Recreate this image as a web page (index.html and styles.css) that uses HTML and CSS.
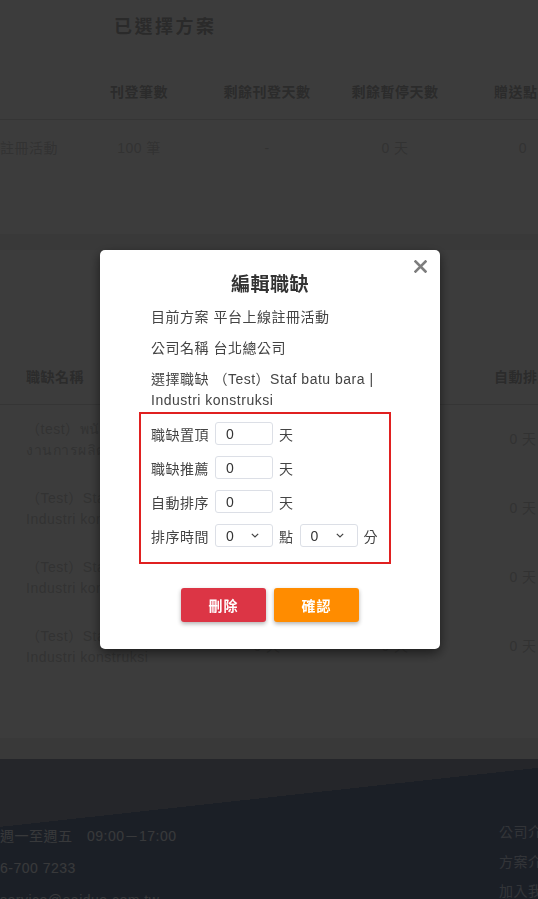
FILE: index.html
```html
<!DOCTYPE html>
<html>
<head>
	<meta charset="utf-8">
	<title>編輯職缺</title>
	<link rel="stylesheet" href="styles.css">
</head>
<body>
	<main class="page">

		<section class="card plan-card">
			<h2 class="card-title">已選擇方案</h2>
			<div class="plan-table">
				<div class="tr th">
					<span class="c-first"></span>
					<span>刊登筆數</span>
					<span>剩餘刊登天數</span>
					<span>剩餘暫停天數</span>
					<span>贈送點數</span>
				</div>
				<div class="tr">
					<span class="c-first">平台上線註冊活動</span>
					<span>100 筆</span>
					<span>-</span>
					<span>0 天</span>
					<span>0</span>
				</div>
			</div>
		</section><!-- / plan-card -->

		<section class="card job-card">
			<h2 class="card-title">職缺設定</h2>
			<div class="job-table">
				<div class="tr th">
					<span class="c-name">職缺名稱</span>
					<span>職缺置頂</span>
					<span>職缺推薦</span>
					<span>自動排序</span>
				</div>
				<div class="tr">
					<span class="c-name">（test）พนักงานฝ่ายผลิต | งานการผลิต</span>
					<span>0 天</span>
					<span>0 天</span>
					<span>0 天</span>
				</div>
				<div class="tr">
					<span class="c-name">（Test）Staf batu bara | Industri konstruksi</span>
					<span>0 天</span>
					<span>0 天</span>
					<span>0 天</span>
				</div>
				<div class="tr">
					<span class="c-name">（Test）Staf batu bara | Industri konstruksi</span>
					<span>0 天</span>
					<span>0 天</span>
					<span>0 天</span>
				</div>
				<div class="tr">
					<span class="c-name">（Test）Staf batu bara | Industri konstruksi</span>
					<span>0 天</span>
					<span>0 天</span>
					<span>0 天</span>
				</div>
			</div>
		</section><!-- / job-card -->

	</main>

	<footer class="footer">
		<div class="footer-info">
			<p>週一至週五　09:00－17:00</p>
			<p>6-700 7233</p>
			<p>service@eaidue.com.tw</p>
		</div>
		<div class="footer-links">
			<p>公司介紹</p>
			<p>方案介紹</p>
			<p>加入我們</p>
		</div>
	</footer>

	<div class="mask">
		<div class="modal">
			<span class="modal-close">
				<svg width="13" height="13" viewBox="0 0 13 13"><path d="M1.5 1.5l10 10M11.5 1.5l-10 10" stroke="#7d7d7d" stroke-width="2.6" stroke-linecap="square"/></svg>
			</span>
			<h3 class="modal-title">編輯職缺</h3>

			<div class="modal-body">
				<p class="info">目前方案 平台上線註冊活動</p>
				<p class="info">公司名稱 台北總公司</p>
				<p class="info">選擇職缺 （Test）Staf batu bara | Industri konstruksi</p>

				<div class="setting-box">
					<div class="field">
						<label>職缺置頂</label>
						<input type="text" class="num" value="0">
						<span>天</span>
					</div>
					<div class="field">
						<label>職缺推薦</label>
						<input type="text" class="num" value="0">
						<span>天</span>
					</div>
					<div class="field">
						<label>自動排序</label>
						<input type="text" class="num" value="0">
						<span>天</span>
					</div>
					<div class="field">
						<label>排序時間</label>
						<span class="select">
							<select><option>0</option></select>
							<svg width="8" height="5" viewBox="0 0 8 5"><path d="M0.8 0.8l3.2 3.2 3.2-3.2" fill="none" stroke="#444" stroke-width="1.2"/></svg>
						</span>
						<span>點</span>
						<span class="select">
							<select><option>0</option></select>
							<svg width="8" height="5" viewBox="0 0 8 5"><path d="M0.8 0.8l3.2 3.2 3.2-3.2" fill="none" stroke="#444" stroke-width="1.2"/></svg>
						</span>
						<span>分</span>
					</div>
				</div><!-- / setting-box -->
			</div>

			<div class="modal-actions">
				<button class="btn btn-delete">刪除</button>
				<button class="btn btn-confirm">確認</button>
			</div>
		</div><!-- / modal -->
	</div>
</body>
</html>
```

FILE: styles.css
```css
html, body {
  margin: 0;
  height: 100%;
  overflow: hidden;
}

body {
  background: #f3f3f3;
  font-family: "Liberation Sans", "Noto Sans CJK TC", sans-serif;
  font-size: 14px;
  letter-spacing: 0.5px;
}

p {
  margin: 0;
}

/* page behind the mask */
.card {
  background: #fff;
  overflow: hidden;
}

.plan-card {
  height: 234px;
  margin-bottom: 16px;
}

.job-card {
  height: 488px;
  margin-bottom: 21px;
}

.card-title {
  margin: 0;
  padding: 14px 0 0 114px;
  font-size: 18px;
  line-height: 26px;
  letter-spacing: 2.5px;
  color: #b3b3b3;
}

.tr {
  display: flex;
  line-height: 21px;
  color: #d5d5d5;
}

.tr > span {
  flex: 0 0 128px;
  text-align: center;
}

.th {
  font-weight: bold;
  color: #b7b7b7;
  padding: 11px 0 16px;
  border-bottom: 1px solid #e2e2e2;
}

.plan-table {
  margin: 31px 0 0 -75px;
}

.plan-table .c-first {
  flex-basis: 150px;
  white-space: nowrap;
}

.plan-table .tr:not(.th) {
  padding-top: 18px;
}

.job-table {
  margin-top: 66px;
  padding-left: 26px;
}

.job-table .th {
  margin-left: -26px;
  padding-left: 26px;
}

.job-table .tr:not(.th) {
  padding: 13.5px 0;
  align-items: center;
}

.job-table .c-name {
  flex-basis: 177px;
  text-align: left;
}

/* footer */
.footer {
  display: flex;
  height: 200px;
  padding-top: 63px;
  box-sizing: border-box;
  overflow: hidden;
  background: linear-gradient(353.74deg, #7384a2 190px, #9da2b3 190px);
  line-height: 21px;
}

.footer-info {
  flex: 0 0 499px;
  padding-top: 4px;
  color: #eef2f8;
}

.footer-info p {
  margin-bottom: 11px;
}

.footer-links {
  white-space: nowrap;
  color: #d6deec;
}

.footer-links p {
  margin-bottom: 8.5px;
}

/* modal */
.mask {
  position: fixed;
  top: 0;
  left: 0;
  right: 0;
  bottom: 0;
  background: rgba(0, 0, 0, 0.765);
  display: flex;
  align-items: center;
  justify-content: center;
  padding-left: 2px;
}

.modal {
  position: relative;
  width: 340px;
  padding: 21px 0 27px;
  box-sizing: border-box;
  background: #fff;
  border-radius: 5px;
  box-shadow: 0 4px 12px rgba(0, 0, 0, 0.55);
}

.modal-close {
  position: absolute;
  top: 10px;
  right: 13px;
  width: 13px;
  height: 13px;
  cursor: pointer;
}

.modal-close svg {
  display: block;
}

.modal-title {
  margin: 0 0 8px;
  text-align: center;
  font-size: 19px;
  line-height: 28px;
  color: #333;
}

.modal-body {
  padding: 0 49px 0 39px;
  color: #444;
}

.info {
  padding-left: 12px;
  line-height: 21px;
  margin-bottom: 10px;
}

.info:nth-child(3) {
  margin-bottom: 1px;
}

.setting-box {
  border: 2px solid #e02020;
  padding: 8px 10px 15px;
  display: flex;
  flex-direction: column;
  gap: 11px;
}

.field {
  display: flex;
  align-items: center;
  gap: 6px;
  height: 23px;
}

.num,
.select select {
  width: 58px;
  height: 23px;
  box-sizing: border-box;
  margin: 0;
  padding: 0 10px;
  border: 1px solid #dcdfe6;
  border-radius: 3px;
  background: #fff;
  font-family: "Liberation Sans", sans-serif;
  font-size: 14px;
  color: #333;
  outline: none;
}

.select {
  position: relative;
  width: 58px;
  height: 23px;
}

.select select {
  display: block;
  -webkit-appearance: none;
  appearance: none;
}

.select svg {
  position: absolute;
  top: 9px;
  right: 14px;
}

.modal-actions {
  display: flex;
  justify-content: center;
  gap: 8px;
  margin-top: 24px;
}

.btn {
  width: 85px;
  height: 34px;
  border: none;
  border-radius: 3px;
  color: #fff;
  font-family: "Liberation Sans", "Noto Sans CJK TC", sans-serif;
  font-size: 14px;
  font-weight: bold;
  letter-spacing: 1px;
  box-shadow: 0 2px 4px rgba(0, 0, 0, 0.3);
  cursor: pointer;
}

.btn-delete {
  background: #dc3545;
}

.btn-confirm {
  background: #ff8c00;
}
```
